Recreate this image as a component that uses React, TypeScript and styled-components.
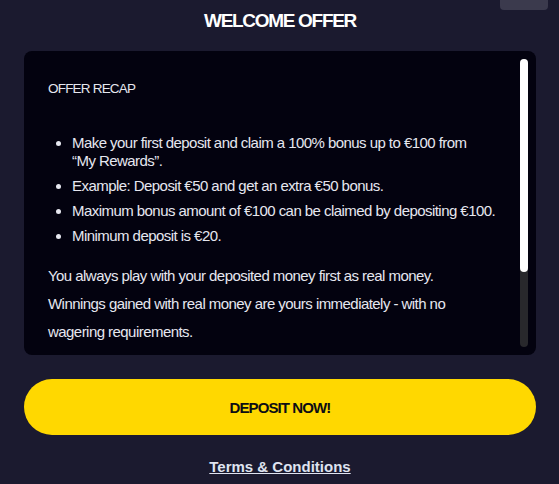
import styled, { createGlobalStyle } from 'styled-components'

const GlobalStyle = createGlobalStyle`
  html,
  body {
    margin: 0;
    padding: 0;
    background: #1b1a2f;
  }

  body {
    font-family: 'Liberation Sans', Arial, sans-serif;
    color: #e6e7ef;
  }
`

const offerPoints = [
  'Make your first deposit and claim a 100% bonus up to €100 from “My\u00a0Rewards”.',
  'Example: Deposit €50 and get an extra €50 bonus.',
  'Maximum bonus amount of €100 can be claimed by depositing €100.',
  'Minimum deposit is €20.',
]

// scroll position of the recap box, as shown: top of a 389px tall text in a 288px window
const visibleShare = 288 / 389

export const App = () => {
  return (
    <>
      <GlobalStyle />

      <Page>
        <CloseTab aria-label="close" />
        <Title>WELCOME OFFER</Title>

        <Card>
          <Scroller>
            <RecapHeading>OFFER RECAP</RecapHeading>
            <PointList>
              {offerPoints.map((point) => (
                <Point key={point}>{point}</Point>
              ))}
            </PointList>
            <BodyText>You always play with your deposited money first as real money.</BodyText>
            <BodyText>
              Winnings gained with real money are yours immediately - with no wagering requirements.
            </BodyText>
          </Scroller>
          <ScrollTrack>
            <ScrollThumb style={{ height: `${visibleShare * 100}%` }} />
          </ScrollTrack>
        </Card>

        <DepositButton>DEPOSIT NOW!</DepositButton>
        <TermsLink href="#">Terms &amp; Conditions</TermsLink>
      </Page>
    </>
  )
}
export default App

const Page = styled.div`
  position: relative;
  display: flex;
  flex-direction: column;
  padding: 9px 23px 0 24px;
`

const CloseTab = styled.button`
  position: absolute;
  top: 0;
  right: 11px;
  width: 48px;
  height: 10px;
  padding: 0;
  border: none;
  border-radius: 0 0 4px 4px;
  background: #3b3a4d;
`

const Title = styled.h2`
  margin: 0;
  font-size: 19px;
  letter-spacing: -1.3px;
  line-height: 24px;
  font-weight: 700;
  text-align: center;
  color: #fff;
`

const Card = styled.div`
  position: relative;
  margin-top: 18px;
  padding: 8px;
  background: #03020f;
  border-radius: 8px;
`

const Scroller = styled.div`
  height: 288px;
  box-sizing: border-box;
  overflow: hidden;
  padding: 20px 29px 0 16px;
`

const ScrollTrack = styled.div`
  position: absolute;
  top: 8px;
  right: 8px;
  bottom: 8px;
  width: 8px;
  border-radius: 4px;
  background: #28282c;
`

const ScrollThumb = styled.div`
  width: 100%;
  border-radius: 4px;
  background: #fff;
`

const RecapHeading = styled.h4`
  margin: 0 0 35px;
  font-size: 13.5px;
  letter-spacing: -0.8px;
  line-height: 20px;
  font-weight: 400;
`

const PointList = styled.ul`
  margin: 0 0 17px;
  padding-left: 24px;
`

const Point = styled.li`
  font-size: 15px;
  letter-spacing: -0.55px;
  line-height: 18px;

  & + & {
    margin-top: 7px;
  }
`

const BodyText = styled.p`
  margin: 0;
  font-size: 15px;
  letter-spacing: -0.55px;
  line-height: 28px;
`

const DepositButton = styled.button`
  margin-top: 24px;
  height: 56px;
  border: none;
  border-radius: 28px;
  background: #ffd800;
  color: #0d0d14;
  font-family: inherit;
  font-size: 15px;
  letter-spacing: -0.9px;
  font-weight: 700;
  cursor: pointer;
`

const TermsLink = styled.a`
  align-self: center;
  margin-top: 22px;
  font-size: 15px;
  line-height: 20px;
  font-weight: 700;
  color: #dfe3f0;
  text-decoration: underline;
`
